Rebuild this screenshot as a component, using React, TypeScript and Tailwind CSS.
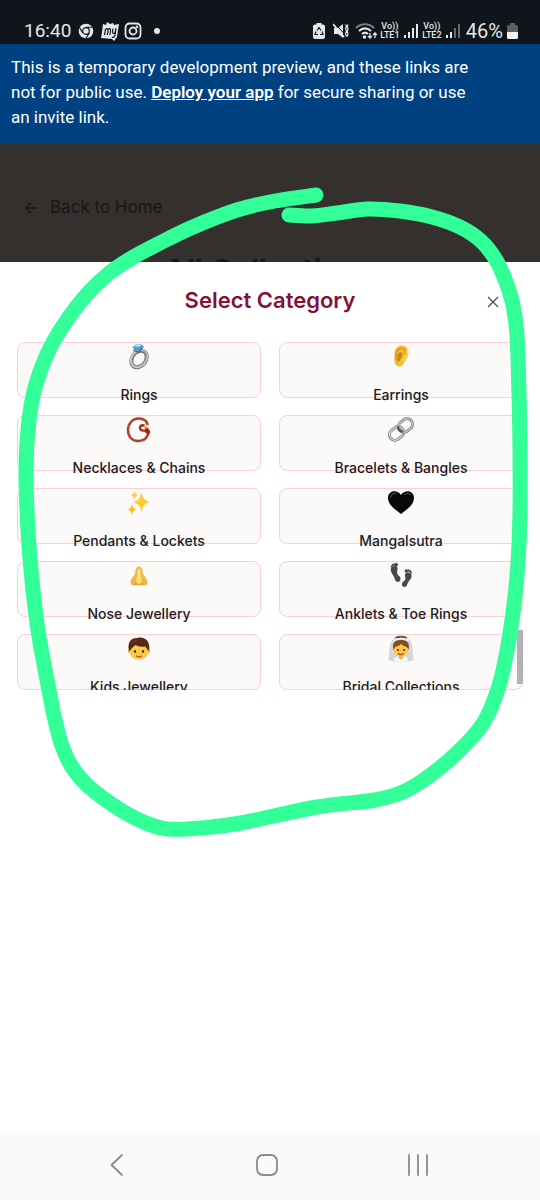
import React from "react";

type Category = { name: string; icon: React.ReactNode };

const Ring = () => (
  <svg viewBox="0 0 28 28" className="size-7" aria-hidden="true">
    <ellipse cx="14" cy="16" rx="6.800" ry="9" transform="rotate(38 14 16)" fill="none" stroke="#74777b" strokeWidth="4" />
    <ellipse cx="14" cy="15.600" rx="7.200" ry="9.300" transform="rotate(38 14 15.600)" fill="none" stroke="#c9cccf" strokeWidth="2" />
    <path d="M18 8c4 2 4 6 1.500 10" fill="none" stroke="#8d9195" strokeWidth="1.500" />
    <path d="M7.500 3.500l4-2.500 5.500.5 2 2.500-4.500 4-5-.8z" fill="#459fcd" />
    <path d="M7.500 3.500l4-2.500 5.500.5-3 2.500z" fill="#a5e0f7" />
    <path d="M8 7.500l5.500 1.500 4-3.500" fill="none" stroke="#4a6373" strokeWidth="1.200" />
  </svg>
);

const Ear = () => (
  <svg viewBox="0 0 28 28" className="size-7" aria-hidden="true">
    <path d="M12 3c5-1.500 9.500 1 9.500 6-.2 4-2 6-3.500 9-1.500 3.500-3.500 6-6.500 5.500-3.500-.6-4.500-4-4-8.500C7.500 10 7 5 12 3z" fill="#f5bd32" />
    <path d="M9.500 17c-1.500-5 0-10.500 4-11.500 3.500-.6 5.500 2 4.500 5.500" fill="none" stroke="#dc9717" strokeWidth="1.500" strokeLinecap="round" />
    <path d="M10.500 11.500c2-3.500 5.500-2.500 5 .5-.5 3-2 3.500-2.500 5.500-.6 1.600-2.500 1.500-2.800-.5z" fill="#c98718" />
    <path d="M20.300 6c1 5-3 8-4.500 11.500" fill="none" stroke="#ffdd62" strokeWidth="1.400" />
  </svg>
);

const Necklace = () => (
  <svg viewBox="0 0 28 28" className="size-7" aria-hidden="true">
    <path d="M22.500 9c0-4-4-6.500-8.500-6.500C7 2.500 3 8 3 14c0 6.500 4 11 10 11 4.500 0 8-2 9.500-5.500 1.500-2.500 1-4.500-1.500-4.500-1.500-1-4 .5-5.500-1.500-1.500-3 1-5 4-4" fill="none" stroke="#a5301f" strokeWidth="2.400" />
    <path d="M22.500 9c0-4-4-6.500-8.500-6.500C7 2.500 3 8 3 14c0 6.500 4 11 10 11 4.500 0 8-2 9.500-5.500" fill="none" stroke="#cf5643" strokeWidth="1.600" strokeDasharray="1.200 1.200" />
    <path d="M20 11l3 1 2.500 4-2.500 3-3-3z" fill="#b21f17" />
    <circle cx="20.500" cy="11" r="1.500" fill="#f5b52e" />
  </svg>
);

const Link = () => (
  <svg viewBox="0 0 28 28" className="size-7" aria-hidden="true">
    <g fill="none">
      <rect x="2" y="12" width="15" height="11" rx="5.500" transform="rotate(-38 9.500 17.500)" stroke="#707377" strokeWidth="3" />
      <rect x="2" y="12" width="15" height="11" rx="5.500" transform="rotate(-38 9.500 17.500)" stroke="#d2d3d5" strokeWidth="1.600" />
      <rect x="11" y="4" width="15" height="11" rx="5.500" transform="rotate(-38 18.500 9.500)" stroke="#707377" strokeWidth="3" />
      <rect x="11" y="4" width="15" height="11" rx="5.500" transform="rotate(-38 18.500 9.500)" stroke="#c3c4c7" strokeWidth="1.600" />
      <path d="M11 10.500c0 3 2 5 5 5" stroke="#515458" strokeWidth="2" />
    </g>
  </svg>
);

const Sparkles = () => (
  <svg viewBox="0 0 28 28" className="size-7" aria-hidden="true">
    <path d="M16.500 2.500c1 6.500 2.500 8.500 8 10.500-5.500 2-7 4-8 10.500-1-6.500-2.500-8.500-8-10.500 5.500-2 7-4 8-10.500z" fill="#fdc72e" />
    <path d="M16.500 6c.4 4.500-.6 6-4.500 7 3.900-.2 5.500-1 4.500-7z" fill="#ffe884" />
    <path d="M7 14.500c.6 3.700 1.500 5 4.800 6-3.300 1-4.200 2.300-4.800 6-.6-3.700-1.500-5-4.800-6 3.300-1 4.200-2.300 4.800-6z" fill="#fdbf1d" />
    <path d="M9.500 1.500c.4 2.800 1 3.800 3.700 4.700-2.700.9-3.300 1.900-3.700 4.700-.4-2.800-1-3.800-3.700-4.700 2.700-.9 3.300-1.900 3.700-4.700z" fill="#fdcb3d" />
  </svg>
);

const Heart = () => (
  <svg viewBox="0 0 28 28" className="size-7" aria-hidden="true">
    <path d="M14 25C8 20.500 1 15.500 1 9 1 1.500 10 0 14 6 18 0 27 1.500 27 9c0 6.500-7 11.500-13 16z" fill="#090909" />
    <path d="M3.500 8.500C4 5.500 6.500 4 9 4.500M17.500 5.500c2-1.500 4-1.500 5.500-.5" fill="none" stroke="#3b3b3b" strokeWidth="1.500" strokeLinecap="round" />
  </svg>
);

const Nose = () => (
  <svg viewBox="0 0 28 28" className="size-7" aria-hidden="true">
    <path d="M14 4.500c2.500 0 3.500 2.500 3.800 6 .3 3.500 4.700 5.500 4.700 10 0 3-3.500 3.500-5.500 2.500-2 1-4 1-6 0-2 1-5.500.5-5.500-2.500 0-4.500 4.400-6.500 4.700-10 .3-3.500 1.300-6 3.800-6z" fill="#efb946" />
    <path d="M14 5.500c2.500 4 .8 7 2.200 10 1.200 3.500-.2 6-2.200 6s-3.400-2.500-2.200-6c1.400-3-.3-6 2.200-10z" fill="#ffe07c" />
    <path d="M9 22.500c1.500-.8 2.300-.8 3 .5M19 22.500c-1.500-.8-2.300-.8-3 .5" fill="none" stroke="#c99030" strokeWidth="1" />
  </svg>
);

const Footprints = () => (
  <svg viewBox="0 0 28 28" className="size-7" aria-hidden="true">
    <g fill="#47494b">
      <path d="M4 6c1-2 6-3 6.500 0 .3 3-1.500 5 1 7.500 3 2 2.500 6.500-.5 6.500-3 0-3-3.500-4.500-6C5 11 3 9 4 6z" />
      <path d="M24.300 12c-1-2-5.800-2.500-6.300.5-.3 2.500 1.500 4.500-1 6.500-3 2-2.500 6 .5 6 2.800 0 2.500-3 4-5.200 1.700-2.300 4-4.300 2.800-7.800z" />
      <circle cx="4.600" cy="4.500" r="1" /><circle cx="5.700" cy="3.200" r="1.100" /><circle cx="7.300" cy="2.500" r="1.200" /><circle cx="9.400" cy="2.800" r="1.700" />
      <circle cx="24" cy="10.500" r="1" /><circle cx="23" cy="9.200" r="1.100" /><circle cx="21.500" cy="8.500" r="1.200" /><circle cx="19.300" cy="9" r="1.700" />
    </g>
  </svg>
);

const Kid = () => (
  <svg viewBox="0 0 28 28" className="size-7" aria-hidden="true">
    <circle cx="4.800" cy="16" r="2" fill="#e5a336" />
    <circle cx="23.200" cy="16" r="2" fill="#e5a336" />
    <ellipse cx="14" cy="15.500" rx="9.600" ry="9.500" fill="#fbc84b" />
    <path d="M4 15.500C2 7 6.500 2.500 12.500 3 19.500 1 26 6.500 24 15.500l-1.500-.5c-.5-1.500-1.500-2.500-2.500-3.500-4 .5-7 0-9.500-1.500-1.500 1.500-4 2.500-5 5.500z" fill="#5a2816" />
    <path d="M7 7.500c1.500-2 3.500-2.800 6-2.500" fill="none" stroke="#85452a" strokeWidth="1" />
    <ellipse cx="10" cy="16.500" rx="1.100" ry="1.400" fill="#4b2a16" />
    <ellipse cx="18" cy="16.500" rx="1.100" ry="1.400" fill="#4b2a16" />
    <path d="M11.500 21c1.500 1 3.500 1 5 0" fill="none" stroke="#a8561b" strokeWidth="1.200" strokeLinecap="round" />
  </svg>
);

const Bride = () => (
  <svg viewBox="0 0 28 28" className="size-7" aria-hidden="true">
    <path d="M14 1C6 1 3 7 2.500 14L1.500 25c4 2 8 1.500 12.500 1.500S22.500 27 26.500 25l-1-11C25 7 22 1 14 1z" fill="#d5d6d9" />
    <path d="M7 25c0-3 3-4 7-4s7 1 7 4l-2 1.500H9z" fill="#f7f7f8" />
    <path d="M12 19h4v4l-2 1.500-2-1.500z" fill="#e7a738" />
    <ellipse cx="14" cy="14.500" rx="7.500" ry="7.500" fill="#fac747" />
    <path d="M6.300 15C5 8 8 4.500 14 4.500S23 8 21.700 15c-.7-2-2-3.500-4.700-4-1-.3-2-1-3-2-1 1-2 1.700-3 2-2.700.5-4 2-4.700 4z" fill="#8a4c1c" />
    <path d="M8.500 3c3.500-1.500 7.500-1.500 11 0" fill="none" stroke="#70503b" strokeWidth="2" />
    <path d="M6.500 5.500c4.500-2 10.500-2 15 0" fill="none" stroke="#eeeef1" strokeWidth="2" />
    <circle cx="11" cy="15" r="1.100" fill="#4b2a16" />
    <circle cx="17" cy="15" r="1.100" fill="#4b2a16" />
    <path d="M11.500 18.500c1.500 1.300 3.500 1.300 5 0" fill="none" stroke="#b7402a" strokeWidth="1.200" strokeLinecap="round" />
  </svg>
);

const categories: Category[] = [
  { name: "Rings", icon: <Ring /> },
  { name: "Earrings", icon: <Ear /> },
  { name: "Necklaces & Chains", icon: <Necklace /> },
  { name: "Bracelets & Bangles", icon: <Link /> },
  { name: "Pendants & Lockets", icon: <Sparkles /> },
  { name: "Mangalsutra", icon: <Heart /> },
  { name: "Nose Jewellery", icon: <Nose /> },
  { name: "Anklets & Toe Rings", icon: <Footprints /> },
  { name: "Kids Jewellery", icon: <Kid /> },
  { name: "Bridal Collections", icon: <Bride /> },
];

const markerPoints: [number, number][] = [
  [316, 195], [275, 201], [237, 210], [193, 227], [158, 244], [130, 259], [108, 274], [88, 293],
  [69, 317], [50, 348], [36, 384], [29, 420], [26, 470], [28, 530], [32, 580], [38, 630],
  [47, 680], [55, 720], [62, 746], [72, 767], [86, 784], [103, 798], [124, 812], [146, 823],
  [168, 829], [202, 828], [241, 823], [317, 807], [375, 800], [405, 791], [432, 774], [461, 749],
  [484, 722], [499, 686], [508, 645], [514, 605], [518, 563], [520, 513], [520, 450], [519, 395],
  [517, 335], [513, 305], [506, 282], [496, 260], [481, 241], [460, 227], [432, 217], [400, 211],
  [368, 209], [337, 213], [312, 216], [289, 215],
];

// Catmull-Rom spline through the points, written as cubic Bézier segments.
const smoothPath = (pts: [number, number][]) =>
  pts.slice(1).reduce((d, p, i) => {
    const a = pts[Math.max(i - 1, 0)];
    const b = pts[i];
    const n = pts[Math.min(i + 2, pts.length - 1)];
    return `${d}C${b[0] + (p[0] - a[0]) / 6} ${b[1] + (p[1] - a[1]) / 6} ${p[0] - (n[0] - b[0]) / 6} ${p[1] - (n[1] - b[1]) / 6} ${p[0]} ${p[1]}`;
  }, `M${pts[0][0]} ${pts[0][1]}`);

const Signal = ({ weak = false }: { weak?: boolean }) => (
  <svg viewBox="0 0 14 16" className="h-4 w-[14px]" aria-hidden="true">
    <g fill="#e5e7e9">
      <rect x="0" y="12" width="2" height="3" />
      <rect x="4" y="9" width="2" height="6" />
      <rect x="8" y="5" width="2" height="10" opacity={weak ? 0.4 : 1} />
      <rect x="12" y="1" width="2" height="14" opacity={weak ? 0.4 : 1} />
    </g>
  </svg>
);

const Volte = ({ line }: { line: string }) => (
  <span className="flex w-5 flex-col items-center text-[9px] leading-[9px] font-medium">
    <span>Vo))</span>
    <span>{line}</span>
  </span>
);

const StatusBar = () => (
  <div className="flex h-11 items-start justify-between bg-[#10141b] pt-[19px] pr-[22px] pl-6 font-['Roboto',sans-serif] text-[#e5e7e9]">
    <div className="flex h-6 items-center">
      <span className="w-[54px] text-[19px] leading-6">16:40</span>
      <svg viewBox="0 0 16 16" className="size-4" aria-hidden="true">
        <circle cx="8" cy="8" r="7.300" fill="#e5e7e9" />
        <path d="M8 4.200h6.700M4.700 9.900L1.400 4.200M11.300 9.900L8 15.300" stroke="#10141b" strokeWidth="1.100" />
        <circle cx="8" cy="8" r="3.300" fill="#e5e7e9" stroke="#10141b" strokeWidth="1.200" />
      </svg>
      <svg viewBox="0 0 20 20" className="ml-[6px] size-5" aria-hidden="true">
        <path d="M3 3l3 1 1-3 3 2 3-1 1 2 5-1-2 13-3 4-2-2-11-1L2 11z" fill="#e5e7e9" />
        <path d="M4.500 14l1-6M5.500 8.500c1.500-2 3-.5 2.500 1.500l-.7 4M8 8.500c1.500-2 3-.5 2.500 1.500l-.7 4M13 7.500l-.5 3.500c0 2 1.700 2 2.700 0l.8-3.500-1 6.500c-.3 2-2 3-3 2" fill="none" stroke="#10141b" strokeWidth="1.200" />
      </svg>
      <svg viewBox="0 0 18 18" className="ml-1 size-[18px]" fill="none" stroke="#e5e7e9" strokeWidth="1.800" aria-hidden="true">
        <rect x="1.500" y="1.500" width="15" height="15" rx="4" />
        <circle cx="9" cy="9" r="3.500" />
        <circle cx="13" cy="5" r=".5" />
      </svg>
      <span className="ml-3 size-[6px] rounded-full bg-[#e5e7e9]" />
    </div>
    <div className="flex h-6 items-center">
      <svg viewBox="0 0 12 16" className="h-4 w-3" aria-hidden="true">
        <path d="M3.500 0h5v1.500H10a2 2 0 012 2V14a2 2 0 01-2 2H2a2 2 0 01-2-2V3.500a2 2 0 012-2h1.500z" fill="#e5e7e9" />
        <path d="M4 7.500L6 4.500l2 3M9 8.500l1 3H7M5 11.500H2l1-3" fill="none" stroke="#10141b" strokeWidth="1.200" />
      </svg>
      <svg viewBox="0 0 16 16" className="ml-2 size-4" aria-hidden="true">
        <path d="M1 5h4l5-4v14l-5-4H1z" fill="#e5e7e9" />
        <path d="M2 .5l10 11" stroke="#10141b" strokeWidth="1" />
        <path d="M0 1l11 13" stroke="#e5e7e9" strokeWidth="1.800" />
        <path d="M12.500 1.500l1 2-1 2 1 2.500-1 2.500 1 3M15 1.500l-.8 2 .8 2.500-.8 2.500.8 2.500-.8 2.500" fill="none" stroke="#e5e7e9" strokeWidth="1.200" />
      </svg>
      <svg viewBox="0 0 22 18" className="ml-[6px] h-[18px] w-[22px]" fill="none" stroke="#e5e7e9" strokeWidth="2" aria-hidden="true">
        <path d="M1 6C6 1 14 1 19 6" opacity=".5" />
        <path d="M4 9c4-3.500 8-3.500 12 0M7 12c2-1.800 4-1.800 6 0" />
        <circle cx="9.500" cy="15" r=".8" />
        <path d="M15 11v5m-2-2l2 2 2-2M20 16v-5m-2 2l2-2 2 2" strokeWidth="1.300" />
      </svg>
      <span className="ml-[3px]"><Volte line="LTE1" /></span>
      <span className="ml-1"><Signal /></span>
      <span className="ml-1"><Volte line="LTE2" /></span>
      <span className="ml-1"><Signal weak /></span>
      <span className="ml-[6px] text-[20px] leading-6">46%</span>
      <svg viewBox="0 0 11 16" className="ml-1 h-4 w-[11px]" aria-hidden="true">
        <path d="M3 0h5v2h1.500A1.500 1.500 0 0111 3.500V9H0V3.500A1.500 1.500 0 011.500 2H3z" fill="#5c5f64" />
        <path d="M0 9h11v5.500A1.500 1.500 0 019.500 16h-8A1.500 1.500 0 010 14.500z" fill="#f2f3f4" />
      </svg>
    </div>
  </div>
);

export default function App() {
  return (
    <div className="relative flex min-h-screen flex-col overflow-hidden bg-white font-['Inter',sans-serif]">
      <StatusBar />
      <div className="bg-[#004182] pt-[11px] pr-[60px] pb-[13px] pl-[11px] font-['Roboto',sans-serif] text-[17px] leading-[25px] text-white">
        This is a temporary development preview, and these links are not for public use.{" "}
        <a href="#deploy" className="font-semibold underline">Deploy your app</a> for secure sharing or use an invite link.
      </div>

      <div className="h-[119px] overflow-hidden bg-[#33302d] px-6 pt-[53px] text-[#171719]">
        <a href="#home" className="flex h-6 items-center gap-3 text-[17px]">
          <svg viewBox="0 0 14 14" className="size-[14px]" fill="none" stroke="currentColor" strokeWidth="1.300" aria-hidden="true">
            <path d="M13 7H2M7 2L2 7l5 5" />
          </svg>
          Back to Home
        </a>
        <h1 className="mt-8 text-center text-[30px] leading-9 font-bold">All Collections</h1>
      </div>

      <main role="dialog" aria-labelledby="sheet-title" className="flex-1 bg-white px-[17px] pt-5">
        <header className="grid grid-cols-[48px_1fr_48px] items-center">
          <h2 id="sheet-title" className="col-start-2 text-center text-[22px] leading-9 font-semibold text-[#831236]">Select Category</h2>
          <button aria-label="Close" className="flex h-9 items-center pt-1 pl-3 text-[#4b4b4b]">
            <svg viewBox="0 0 12 12" className="size-3" fill="none" stroke="currentColor" strokeWidth="1.200" aria-hidden="true">
              <path d="M1 1l10 10M11 1L1 11" />
            </svg>
          </button>
        </header>
        <div className="relative mt-6 overflow-hidden">
          <div className="grid grid-cols-2 gap-x-[18px] gap-y-[17px]">
            {categories.map((c) => (
              <button key={c.name} className="flex h-14 flex-col items-center rounded-lg border border-[#f9d0d6] bg-[#fbfaf9] text-[14px] leading-5 font-medium whitespace-nowrap text-[#1c1b1d]">
                <span className="shrink-0">{c.icon}</span>
                <span className="mt-[14px] shrink-0">{c.name}</span>
              </button>
            ))}
          </div>
          <span className="absolute right-0 bottom-[6px] h-[54px] w-[6px] bg-[#b5b2b4]" />
        </div>
      </main>

      <nav className="flex h-[68px] items-center justify-around bg-[#fbfaf8] pr-[46px] pb-[2px] pl-10 text-[#8b8a89]">
        <button aria-label="Back" className="flex size-8 items-center justify-center">
          <svg viewBox="0 0 24 24" className="size-6" fill="none" stroke="currentColor" strokeWidth="1.800" strokeLinecap="round" strokeLinejoin="round" aria-hidden="true">
            <path d="M18 2L7.500 12 18 22" />
          </svg>
        </button>
        <button aria-label="Home" className="flex size-8 items-center justify-center">
          <svg viewBox="0 0 24 24" className="size-6" fill="none" stroke="currentColor" strokeWidth="1.800" aria-hidden="true">
            <rect x="2" y="2" width="20" height="20" rx="6" />
          </svg>
        </button>
        <button aria-label="Recent apps" className="flex size-8 items-center justify-center">
          <svg viewBox="0 0 24 24" className="size-6" fill="none" stroke="currentColor" strokeWidth="1.800" strokeLinecap="round" aria-hidden="true">
            <path d="M3 2v20M12 2v20M21 2v20" />
          </svg>
        </button>
      </nav>

      <svg viewBox="0 0 540 1200" className="pointer-events-none absolute inset-x-0 top-0 w-full" fill="none" aria-hidden="true">
        <path d={smoothPath(markerPoints)} stroke="#33ff99" strokeWidth="15" strokeLinecap="round" strokeLinejoin="round" />
      </svg>
    </div>
  );
}
